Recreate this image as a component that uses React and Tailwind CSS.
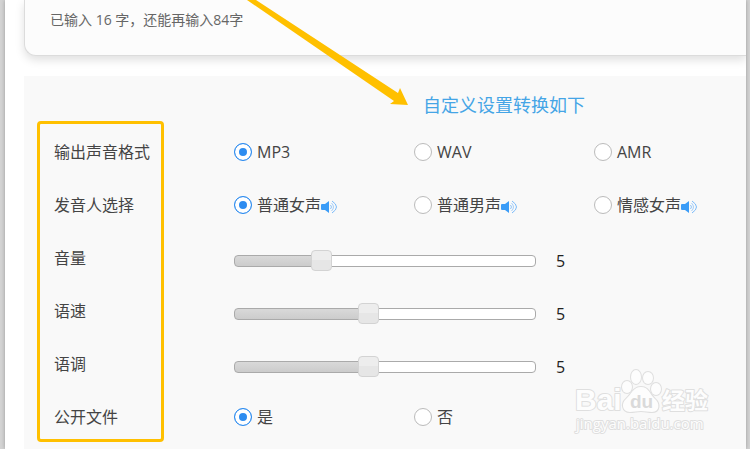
import React, { useState } from 'react';

const formats = ['MP3', 'WAV', 'AMR'];
const voices = ['普通女声', '普通男声', '情感女声'];
const visibility = ['是', '否'];

function Speaker() {
  return (
    <svg className="mt-1 h-4 w-[17px] shrink-0" viewBox="0 0 17 16" fill="none" aria-hidden="true">
      <path d="M0 6q0-1 1-1h3l4-3v12l-4-3H1q-1 0-1-1z" fill="#3b9cf7" />
      <path d="M9.5 6q2 2 0 4" stroke="#8cc4fa" />
      <path d="M10.5 4q4 4 0 8" stroke="#a5d0fb" />
      <path d="M11 2q9 6 0 12" stroke="#7dbcf9" />
    </svg>
  );
}

function Row({ children }) {
  return <div className="grid h-[53px] grid-cols-[180px_1fr] items-center">{children}</div>;
}

function RadioRow({ title, name, options, speaker }) {
  return (
    <Row>
      <span id={name}>{title}</span>
      <div role="radiogroup" aria-labelledby={name} className="grid grid-cols-[180px_180px_1fr] items-center">
        {options.map((option, i) => (
          <label key={option} className="flex items-center whitespace-nowrap">
            <input
              type="radio"
              name={name}
              defaultChecked={i === 0}
              className="mr-[5px] size-[18px] shrink-0 appearance-none rounded-full border border-[#bbbbbb] bg-white checked:border-[#2d8cf0] checked:bg-[#2d8cf0] checked:shadow-[inset_0_0_0_4px_#ffffff]"
            />
            {option}
            {speaker && <Speaker />}
          </label>
        ))}
      </div>
    </Row>
  );
}

function SliderRow({ title, name, initial, level }) {
  const [value, setValue] = useState(initial);

  return (
    <Row>
      <label htmlFor={name}>{title}</label>
      <div className="flex items-center gap-5 pt-[6px]">
        <input
          id={name}
          type="range"
          min="0"
          max="1000"
          value={value}
          onChange={e => setValue(Number(e.target.value))}
          style={{ backgroundSize: `${value / 10}% 100%` }}
          className="h-3 w-[302px] appearance-none rounded-sm border border-[#aaaaaa] bg-white bg-linear-to-b from-[#d9d9d9] to-[#cccccc] bg-no-repeat [&::-webkit-slider-thumb]:size-[21px] [&::-webkit-slider-thumb]:appearance-none [&::-webkit-slider-thumb]:rounded-sm [&::-webkit-slider-thumb]:border [&::-webkit-slider-thumb]:border-[#d3d3d3] [&::-webkit-slider-thumb]:bg-[linear-gradient(#ededed_50%,#e6e6e6_50%)]"
        />
        <output htmlFor={name} className="text-[#222222]">{level}</output>
      </div>
    </Row>
  );
}

function Arrow() {
  return (
    <svg className="pointer-events-none absolute top-0 left-[240px] h-[110px] w-[170px]" viewBox="240 0 170 110" aria-hidden="true">
      <path d="M247 0h9L398 93l2-5 8 17-18-1 4-3z" fill="#ffc000" />
    </svg>
  );
}

function Watermark() {
  return (
    <svg
      className="pointer-events-none absolute right-9 bottom-3 h-[70px] w-[140px]"
      viewBox="0 0 140 70"
      fill="#fdfdfd"
      stroke="#dfdfdf"
      strokeWidth="2"
      strokeLinejoin="round"
      aria-hidden="true"
    >
      <g paintOrder="stroke">
        <text x="5" y="43" fontSize="30" fontWeight="700" fontFamily="Liberation Sans, sans-serif">Bai</text>
        <text x="92" y="42" fontSize="23" fontWeight="700" fontFamily="Noto Sans CJK SC, sans-serif">经验</text>
        <text x="6" y="62" fontSize="15" fontFamily="Open Sans, sans-serif">jingyan.baidu.com</text>
        <path d="M71 20c8 0 9 8 14 12s5 13-3 13c-4 0-7-1-11-1s-7 1-11 1c-8 0-9-9-4-13s7-12 15-12z" />
        <ellipse cx="57" cy="20" rx="5" ry="6" />
        <ellipse cx="66" cy="10" rx="5" ry="7" />
        <ellipse cx="78" cy="11" rx="5" ry="6" />
        <ellipse cx="86" cy="22" rx="5" ry="6" />
      </g>
      <text x="60" y="41" fontSize="19" fontWeight="700" fontFamily="Liberation Sans, sans-serif" fill="#dadada" stroke="none">du</text>
    </svg>
  );
}

export default function App() {
  return (
    <div className="min-h-screen bg-[#d4d4d4] pr-1 pl-[5px] font-['Open_Sans','Noto_Sans_CJK_SC',sans-serif] text-base text-[#444444]">
      <main className="min-h-screen overflow-hidden bg-white pl-[19px] shadow-[0_0_4px_#999999]">
        <section className="rounded-bl-xl border-b border-l border-[#dcdcdc] bg-[#fcfcfc] px-[25px] pt-[10px] pb-[25px] shadow-[0_4px_10px_#00000020]">
          <p className="text-sm text-[#666666]">已输入 16 字，还能再输入84字</p>
        </section>

        <section className="relative mt-5 min-h-[373px] bg-[#f9f9f9] pt-[9px] pl-[30px]">
          <h2 className="h-10 pl-[369px] text-lg leading-10 text-[#45a5e6]">自定义设置转换如下</h2>
          <RadioRow title="输出声音格式" name="format" options={formats} />
          <RadioRow title="发音人选择" name="voice" options={voices} speaker />
          <SliderRow title="音量" name="volume" initial={272} level={5} />
          <SliderRow title="语速" name="speed" initial={441} level={5} />
          <SliderRow title="语调" name="pitch" initial={441} level={5} />
          <RadioRow title="公开文件" name="visibility" options={visibility} />
          <div className="pointer-events-none absolute top-[45px] left-[13px] h-[321px] w-[127px] rounded-sm border-3 border-[#ffc000]" />
          <Watermark />
        </section>
      </main>
      <Arrow />
    </div>
  );
}
